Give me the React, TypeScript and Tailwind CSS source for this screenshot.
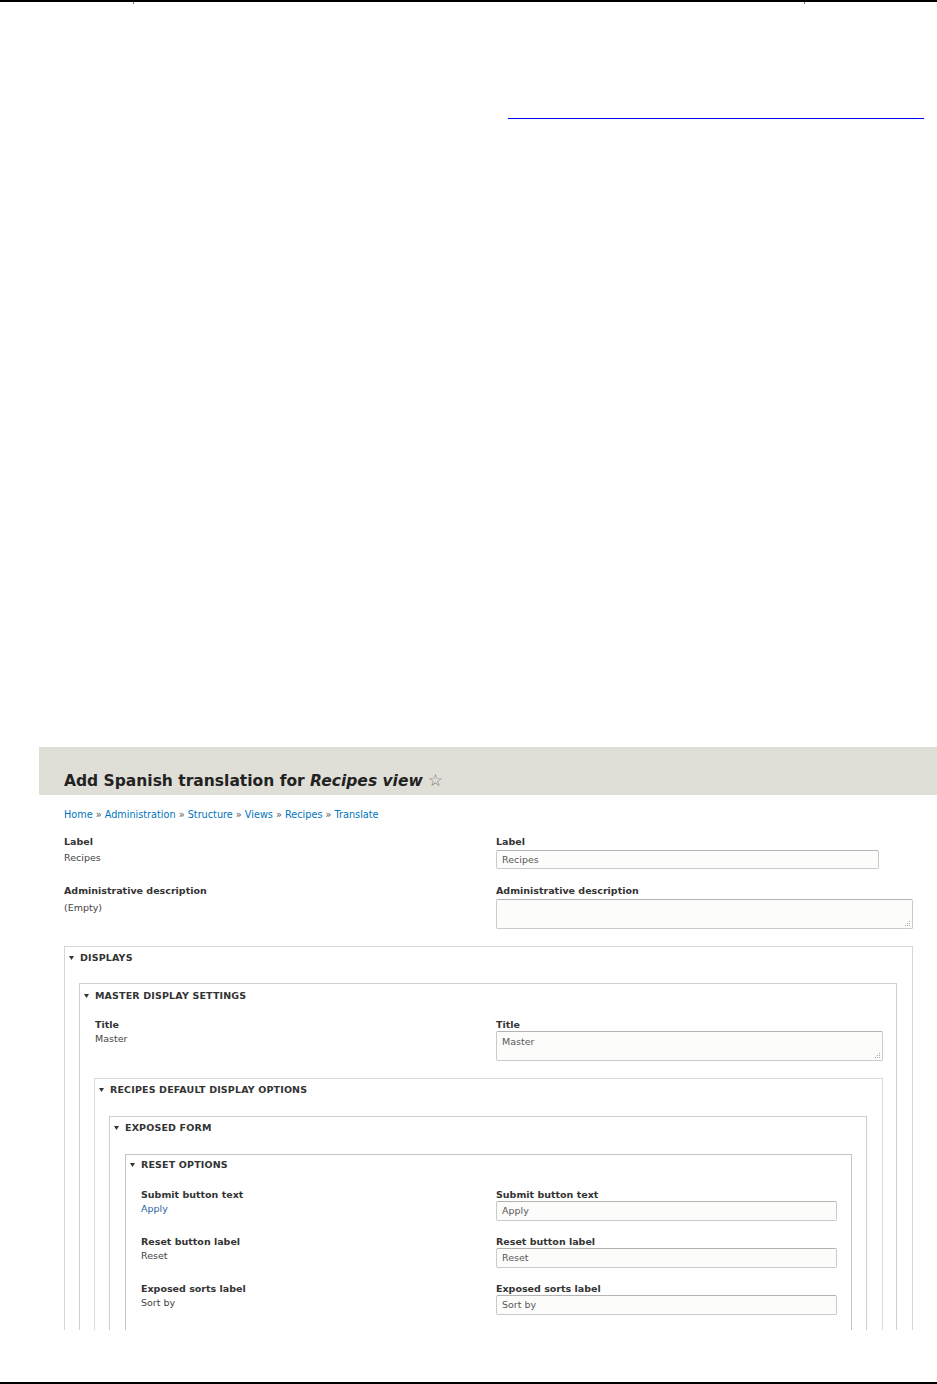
import type { ReactNode } from 'react'

const FONT = "font-['DejaVu_Sans','Verdana',sans-serif]"

function Caret() {
  return (
    <svg width="5" height="4" viewBox="0 0 5 4" className="mr-[6px] shrink-0">
      <path d="M0 0 L5 0 L2.5 4 Z" fill="#333" />
    </svg>
  )
}

// summary line of a collapsible fieldset
function Legend({ children }: { children: ReactNode }) {
  return (
    <div className="flex h-[12px] items-center pl-[4px] text-[9.5px] font-bold uppercase leading-[12px] tracking-[0.15px] text-[#333]">
      <Caret />
      {children}
    </div>
  )
}

function Grip() {
  return (
    <svg width="5" height="5" viewBox="0 0 5 5" className="absolute bottom-[2px] right-[2px]">
      <rect x="4" y="0" width="1" height="1" fill="#aaa" />
      <rect x="2" y="2" width="1" height="1" fill="#aaa" />
      <rect x="4" y="2" width="1" height="1" fill="#aaa" />
      <rect x="0" y="4" width="1" height="1" fill="#aaa" />
      <rect x="2" y="4" width="1" height="1" fill="#aaa" />
      <rect x="4" y="4" width="1" height="1" fill="#aaa" />
    </svg>
  )
}

function Input({ value, w, h = 20, area = false, mt }: { value?: string; w: string; h?: number; area?: boolean; mt: string }) {
  return (
    <div
      className={`relative ${mt} ${w} rounded-[2px] border border-[#cacaca] border-t-[#b3b3b3] bg-[#fcfcfa] pl-[5px] text-[9.5px] leading-[12px] text-[#595959] ${
        area ? 'pt-[4px]' : 'flex items-center'
      }`}
      style={{ height: h }}
    >
      {value}
      {area && <Grip />}
    </div>
  )
}

function Label({ children }: { children: ReactNode }) {
  return <div className="pt-px text-[9.5px] font-bold leading-[12px] text-[#333]">{children}</div>
}

function Value({ children, mt, blue = false }: { children: ReactNode; mt: string; blue?: boolean }) {
  return (
    <div className={`${mt} pt-px text-[9.5px] leading-[12px] ${blue ? 'text-[#2a62a6]' : 'text-[#444]'}`}>{children}</div>
  )
}

function Crumbs() {
  const items = ['Home', 'Administration', 'Structure', 'Views', 'Recipes', 'Translate']
  return (
    <div className="mt-[14px] pl-[25px] text-[9.7px] leading-[12px]">
      {items.map((it, i) => (
        <span key={it}>
          {i > 0 && <span className="text-[#555]"> » </span>}
          <span className="text-[#0074bd]">{it}</span>
        </span>
      ))}
    </div>
  )
}

function ResetRow({ label, value, blue, first }: { label: string; value: string; blue?: boolean; first?: boolean }) {
  return (
    <div className={`flex ${first ? 'mt-[17px]' : 'mt-[14px]'} pl-[15px]`}>
      <div className="w-[355px] shrink-0">
        <Label>{label}</Label>
        <Value mt="mt-px" blue={blue}>
          {value}
        </Value>
      </div>
      <div>
        <Label>{label}</Label>
        <Input value={value} w="w-[341px]" mt="mt-0" />
      </div>
    </div>
  )
}

export default function App() {
  return (
    <div className={`${FONT} flex h-[1384px] w-[937px] flex-col bg-white`}>
      {/* page rule with column ticks */}
      <div className="h-[2px] bg-black" />
      <div className="flex h-[2px]">
        <div className="w-[133px]" />
        <div className="w-[671px] border-l border-[#777]" />
        <div className="flex-1 border-l border-[#777]" />
      </div>

      {/* link underline */}
      <div className="ml-[508px] mt-[114px] h-px w-[416px] bg-[#0000ff]" />

      {/* embedded screenshot */}
      <div className="ml-[39px] mt-[628px] h-[583px] w-[898px] overflow-hidden">
        <div className="h-[48px] bg-[#e0dfd7] pl-[25px] pt-[24px]">
          <h1 className="flex items-baseline text-[15.5px] font-bold leading-[18px] text-[#222]">
            <span>
              Add Spanish translation for <em>Recipes view</em>
            </span>
            <span className="ml-[5px] text-[17px] font-normal leading-[18px] text-[#777]">☆</span>
          </h1>
        </div>

        <Crumbs />

        <div className="pl-[25px] pr-[24px]">
          <div className="mt-[14px] flex">
            <div className="w-[432px] shrink-0">
              <Label>Label</Label>
              <Value mt="mt-[3px]">Recipes</Value>
            </div>
            <div>
              <Label>Label</Label>
              <Input value="Recipes" w="w-[383px]" h={19} mt="mt-[2px]" />
            </div>
          </div>

          <div className="mt-[15px] flex">
            <div className="w-[432px] shrink-0">
              <Label>Administrative description</Label>
              <Value mt="mt-[4px]">(Empty)</Value>
            </div>
            <div>
              <Label>Administrative description</Label>
              <Input w="w-[417px]" h={30} area mt="mt-[2px]" />
            </div>
          </div>

          {/* Displays */}
          <div className="mt-[17px] border border-b-0 border-[#d6d6d6] pt-[5px]">
            <Legend>Displays</Legend>

            <div className="ml-[14px] mr-[15px] mt-[19px] border border-b-0 border-[#cfcfcf] pt-[6px]">
              <Legend>Master display settings</Legend>

              <div className="mt-[16px] flex pl-[15px]">
                <div className="w-[401px] shrink-0">
                  <Label>Title</Label>
                  <Value mt="mt-px">Master</Value>
                </div>
                <div>
                  <Label>Title</Label>
                  <Input value="Master" w="w-[387px]" h={30} area mt="mt-0" />
                </div>
              </div>

              <div className="ml-[14px] mr-[13px] mt-[17px] border border-b-0 border-[#dadada] pt-[5px]">
                <Legend>Recipes default display options</Legend>

                <div className="ml-[14px] mr-[15px] mt-[20px] border border-b-0 border-[#cdcdcd] pt-[5px]">
                  <Legend>Exposed form</Legend>

                  <div className="ml-[15px] mr-[14px] mt-[20px] h-[400px] border border-b-0 border-[#c4c4c4] pt-[4px]">
                    <Legend>Reset options</Legend>
                    <ResetRow label="Submit button text" value="Apply" blue first />
                    <ResetRow label="Reset button label" value="Reset" />
                    <ResetRow label="Exposed sorts label" value="Sort by" />
                  </div>
                </div>
              </div>
            </div>
          </div>
        </div>
      </div>

      <div className="mt-auto h-[2px] bg-black" />
    </div>
  )
}
